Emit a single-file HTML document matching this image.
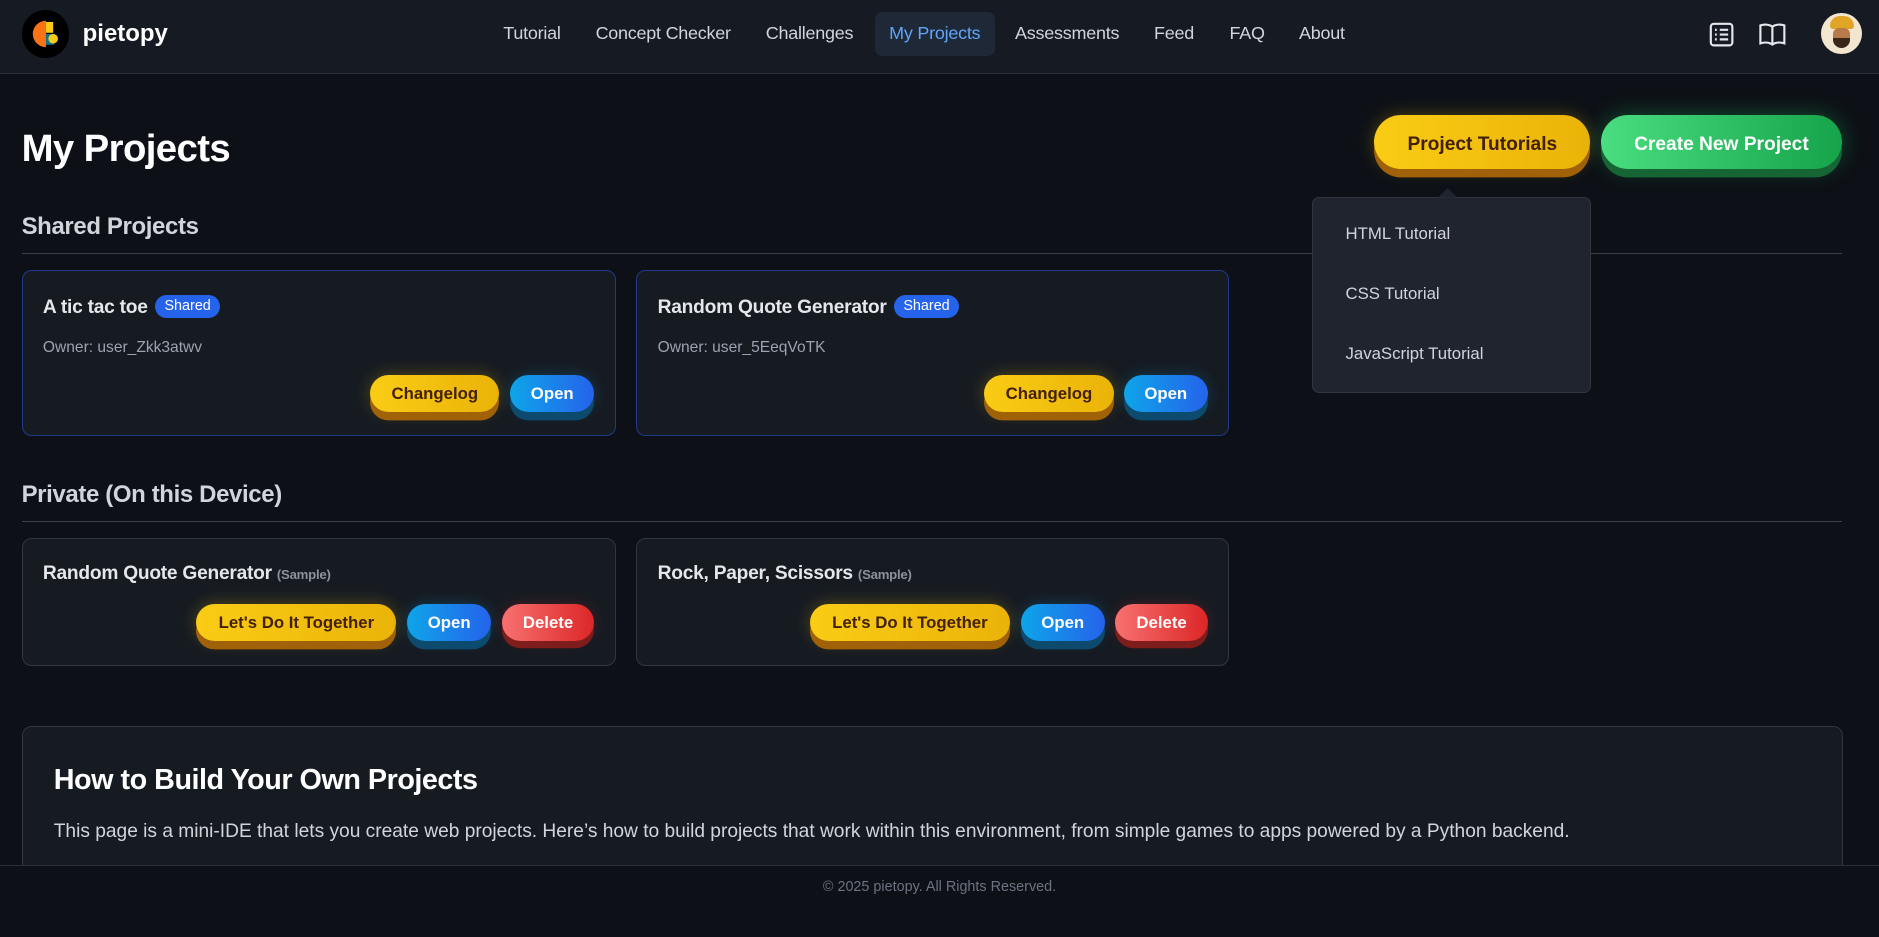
<!DOCTYPE html>
<html><head><meta charset="utf-8">
<style>
html{zoom:1.19834}
*{box-sizing:border-box;margin:0;padding:0}
body{width:1568px;height:737px;overflow:hidden;background:#0d1117;font-family:"Liberation Sans",sans-serif;color:#e5e7eb;position:relative}
.nav{position:absolute;left:0;top:0;width:1568px;height:62px;background:#161a22;border-bottom:1px solid #2a2f38}
.logo{position:absolute;left:18px;top:8px;width:40px;height:40px;border-radius:50%;background:#000}
.brand{position:absolute;left:69px;top:17px;font-weight:bold;font-size:20px;color:#fff}
.link{position:absolute;top:19px;font-size:15px;color:#d1d5db;letter-spacing:-0.2px}
.active{position:absolute;left:730px;top:10px;width:100px;height:37px;background:#1e2836;border-radius:6px}
.ab{position:absolute}
h1{position:absolute;left:18px;top:106px;font-size:32px;font-weight:bold;color:#fff;letter-spacing:-0.5px}
.btn{position:absolute;border-radius:999px;font-weight:bold;text-align:center}
.y{background:linear-gradient(90deg,#facc15,#eab308);color:#422006;box-shadow:0 7px 0 #a16207,0 0 14px rgba(234,179,8,.3)}
.b{background:linear-gradient(90deg,#0ea5e9,#2563eb);color:#fff;box-shadow:0 7px 0 #0c4a6e,0 0 12px rgba(14,165,233,.25)}
.r{background:linear-gradient(90deg,#f87171,#dc2626);color:#fff;box-shadow:0 6px 0 #7f1d1d,0 0 12px rgba(220,38,38,.25)}
.g{background:linear-gradient(90deg,#4ade80,#16a34a);color:#fff;box-shadow:0 7px 0 #166534,0 0 18px rgba(34,197,94,.35)}
.sm{font-size:14px;height:31px;line-height:31px}
.big{font-size:16px;height:45px;line-height:50px}
h2{position:absolute;left:18px;font-size:20px;font-weight:bold;color:#d1d5db;letter-spacing:-0.3px}
.hr{position:absolute;left:18px;width:1519px;height:1px;background:#3a404a}
.card{position:absolute;background:#161b22;border:1px solid #30363d;border-radius:8px}
.card.s{border-color:#1e3a8a}
.t{position:absolute;left:17px;font-size:16px;font-weight:bold;color:#e5e7eb;letter-spacing:-0.2px}
.badge{display:inline-block;background:#2563eb;color:#fff;font-size:12px;font-weight:normal;padding:3px 8px;border-radius:10px;margin-left:6px;vertical-align:2px;letter-spacing:0}
.own{position:absolute;left:17px;top:57px;font-size:13px;color:#9ca3af}
.samp{font-size:11px;color:#8b929c}
.dd{position:absolute;left:1095px;top:164px;width:233px;height:164px;background:#1f242e;border:1px solid #30363d;border-radius:6px}
.dd div{position:absolute;left:27px;font-size:14px;color:#d1d5db}
</style></head><body>
<div class="nav">
 <div class="logo"><svg width="40" height="40" viewBox="0 0 40 40"><path d="M20 9a11 11 0 1 0 0 22z" fill="#f97316"/><path d="M20 10h6v9h-6z" fill="#facc15"/><path d="M20 20h7v9h-7z" fill="#0e7490"/><circle cx="26" cy="24" r="4" fill="#facc15"/></svg></div>
 <div class="brand">pietopy</div>
 <div class="active"></div>
 <div class="link" style="left:420px">Tutorial</div>
 <div class="link" style="left:497px">Concept Checker</div>
 <div class="link" style="left:639px">Challenges</div>
 <div class="link" style="left:742px;color:#60a5fa">My Projects</div>
 <div class="link" style="left:847px">Assessments</div>
 <div class="link" style="left:963px">Feed</div>
 <div class="link" style="left:1026px">FAQ</div>
 <div class="link" style="left:1084px">About</div>
 <svg class="ab" style="left:1426px;top:18px" width="21" height="21" viewBox="0 0 21 21" fill="none" stroke="#e5e7eb" stroke-width="1.8"><rect x="1.5" y="1.5" width="18" height="18" rx="2.5"/><path d="M5 6.5h1.5M9 6.5h7M5 10.5h1.5M9 10.5h7M5 14.5h1.5M9 14.5h7"/></svg>
 <svg class="ab" style="left:1467px;top:19px" width="24" height="19" viewBox="0 0 24 19" fill="none" stroke="#e5e7eb" stroke-width="1.8"><path d="M12 3C9 1 5 1 2 2v15c3-1 7-1 10 1 3-2 7-2 10-1V2c-3-1-7-1-10 1zM12 3v15"/></svg>
 <div class="ab" style="left:1520px;top:11px;width:34px;height:34px;border-radius:50%;background:#f3e6d0;overflow:hidden"><div style="position:absolute;left:7px;top:2px;width:20px;height:11px;background:#e0a526;border-radius:10px 10px 3px 3px"></div><div style="position:absolute;left:10px;top:12px;width:14px;height:16px;background:#b9794a;border-radius:5px 5px 7px 7px"></div><div style="position:absolute;left:10px;top:21px;width:14px;height:8px;background:#3a2618;border-radius:0 0 7px 7px"></div></div>
</div>

<h1>My Projects</h1>
<div class="btn y big" style="left:1147px;top:96px;width:180px">Project Tutorials</div>
<div class="btn g big" style="left:1336px;top:96px;width:201px">Create New Project</div>

<h2 style="top:178px">Shared Projects</h2>
<div class="hr" style="top:211px"></div>

<div class="card s" style="left:18px;top:225px;width:496px;height:139px">
 <div class="t" style="top:20px">A tic tac toe<span class="badge">Shared</span></div>
 <div class="own">Owner: user_Zkk3atwv</div>
 <div class="btn y sm" style="left:290px;top:87px;width:108px">Changelog</div>
 <div class="btn b sm" style="left:407px;top:87px;width:70px">Open</div>
</div>
<div class="card s" style="left:531px;top:225px;width:495px;height:139px">
 <div class="t" style="top:20px">Random Quote Generator<span class="badge">Shared</span></div>
 <div class="own">Owner: user_5EeqVoTK</div>
 <div class="btn y sm" style="left:289px;top:87px;width:109px">Changelog</div>
 <div class="btn b sm" style="left:406px;top:87px;width:70px">Open</div>
</div>

<div class="dd">
 <svg style="position:absolute;left:104px;top:-8px" width="16" height="8"><path d="M0 8L8 0L16 8z" fill="#1f242e"/></svg>
 <div style="top:22px">HTML Tutorial</div>
 <div style="top:72px">CSS Tutorial</div>
 <div style="top:122px">JavaScript Tutorial</div>
</div>

<h2 style="top:401px">Private (On this Device)</h2>
<div class="hr" style="top:435px"></div>

<div class="card" style="left:18px;top:449px;width:496px;height:107px">
 <div class="t" style="top:20px">Random Quote Generator <span class="samp">(Sample)</span></div>
 <div class="btn y sm" style="left:145px;top:54px;width:167px">Let's Do It Together</div>
 <div class="btn b sm" style="left:321px;top:54px;width:70px">Open</div>
 <div class="btn r sm" style="left:400px;top:54px;width:77px">Delete</div>
</div>
<div class="card" style="left:531px;top:449px;width:495px;height:107px">
 <div class="t" style="top:20px">Rock, Paper, Scissors <span class="samp">(Sample)</span></div>
 <div class="btn y sm" style="left:144px;top:54px;width:167px">Let's Do It Together</div>
 <div class="btn b sm" style="left:320px;top:54px;width:70px">Open</div>
 <div class="btn r sm" style="left:399px;top:54px;width:77px">Delete</div>
</div>

<div class="card" style="left:18px;top:606px;width:1520px;height:160px">
 <div style="position:absolute;left:26px;top:31px;font-size:24px;font-weight:bold;color:#fff;letter-spacing:-0.4px">How to Build Your Own Projects</div>
 <div style="position:absolute;left:26px;top:78px;font-size:16px;color:#d1d5db">This page is a mini-IDE that lets you create web projects. Here’s how to build projects that work within this environment, from simple games to apps powered by a Python backend.</div>
</div>
<div class="ab" style="left:0;top:722px;width:1568px;height:60px;background:#0d1117;border-top:1px solid #2a2f38;text-align:center;font-size:12px;color:#6b7280;padding-top:11px">© 2025 pietopy. All Rights Reserved.</div>
</body></html>
